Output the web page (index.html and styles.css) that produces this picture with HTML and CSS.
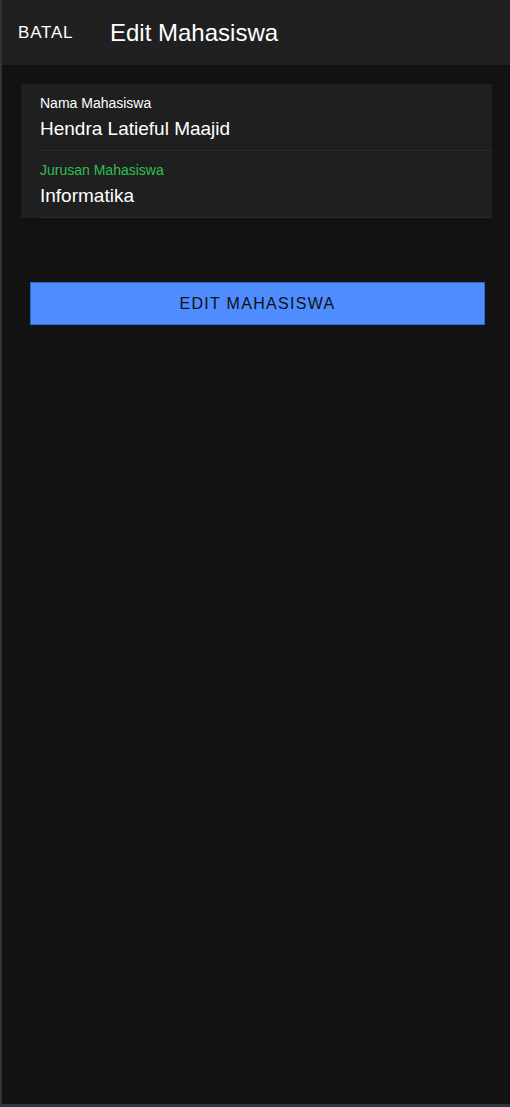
FILE: index.html
```html
<!DOCTYPE html>
<html>
<head>
<meta charset="utf-8">
<link rel="stylesheet" href="styles.css">
</head>
<body>
<div class="app">
  <header class="topbar">
    <span class="cancel">BATAL</span>
    <h1 class="title">Edit Mahasiswa</h1>
  </header>
  <main class="content">
    <div class="card">
      <div class="field">
        <div class="label">Nama Mahasiswa</div>
        <div class="value">Hendra Latieful Maajid</div>
      </div>
      <div class="field">
        <div class="label focused">Jurusan Mahasiswa</div>
        <div class="value">Informatika</div>
      </div>
    </div>
    <button class="submit">EDIT MAHASISWA</button>
  </main>
</div>
</body>
</html>
```

FILE: styles.css
```css
html, body {
  margin: 0;
  padding: 0;
  height: 100%;
  background: #121212;
}
body {
  font-family: "Liberation Sans", Arial, sans-serif;
  color: #fff;
}
.app {
  box-sizing: border-box;
  height: 1107px;
  border-left: 2px solid #2a383c;
  border-bottom: 3px solid #2a383c;
  background: #121212;
  display: flex;
  flex-direction: column;
}
.topbar {
  height: 65px;
  background: #202020;
  display: flex;
  align-items: center;
  padding-left: 16px;
  box-sizing: border-box;
}
.cancel {
  font-size: 17px;
  width: 92px;
  letter-spacing: 0.8px;
}
.title {
  margin: 0;
  font-size: 24px;
  font-weight: normal;
}
.content {
  padding: 19px 18px 0 19px;
}
.card {
  background: #1f1f1f;
}
.field {
  margin-left: 19px;
  border-bottom: 1px solid #2a2a2a;
  height: 67px;
  box-sizing: border-box;
  padding-top: 11px;
}
.label {
  font-size: 14px;
  line-height: 16px;
  color: #fff;
}
.label.focused {
  color: #2fbf55;
}
.value {
  font-size: 19px;
  line-height: 22px;
  margin-top: 7px;
}
.submit {
  display: block;
  margin: 64px 7px 0 9px;
  width: calc(100% - 16px);
  height: 43px;
  background: #4f8cff;
  border: 1px solid #3566c0;
  color: #111;
  font-family: "Liberation Sans", Arial, sans-serif;
  font-size: 16px;
  letter-spacing: 1.3px;
  padding: 0;
}
```
